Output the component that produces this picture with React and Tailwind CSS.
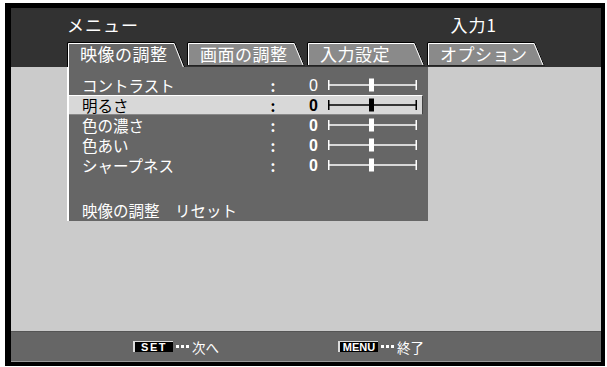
import React from "react";

const FONT = { fontFamily: '"Noto Sans CJK JP", "Noto Sans", sans-serif' };

function Tab({ label, active }) {
  return (
    <div className="relative w-[118px] h-[25px] flex items-start">
      <svg className="absolute inset-0" width="118" height="25" viewBox="0 0 118 25">
        {active ? (
          <>
            <polygon points="0,0 108,0 118,25 0,25" fill="#666666" />
            <polyline points="0.5,25 0.5,0.5 107.7,0.5 117.5,25" fill="none" stroke="#000" strokeWidth="1" />
            <polyline points="1.5,25 1.5,1.5 107,1.5 116.3,25" fill="none" stroke="#fff" strokeWidth="1" />
          </>
        ) : (
          <>
            <polygon points="0,0 108,0 117.5,23.5 0,23.5" fill="#8a8a8a" />
            <polyline points="0.5,24 0.5,0.5 107.7,0.5 117.3,24" fill="none" stroke="#000" strokeWidth="1" />
            <polyline points="1.5,23 1.5,1.5 107,1.5 116,23" fill="none" stroke="#fff" strokeWidth="1" />
            <line x1="0" y1="23.5" x2="118" y2="23.5" stroke="#222" strokeWidth="1" />
          </>
        )}
      </svg>
      <span className="relative pl-[13px] text-[17px] leading-[24px] text-white tracking-[0.5px]">{label}</span>
    </div>
  );
}

function Slider({ dark }) {
  const c = dark ? "#000" : "#fff";
  return (
    <svg width="89" height="14" viewBox="0 0 89 14">
      <line x1="0" y1="7" x2="89" y2="7" stroke={c} strokeWidth="1.5" />
      <line x1="0.75" y1="2" x2="0.75" y2="12" stroke={c} strokeWidth="1.5" />
      <line x1="88.25" y1="2" x2="88.25" y2="12" stroke={c} strokeWidth="1.5" />
      <rect x="41" y="0.5" width="5" height="13" fill={c} />
    </svg>
  );
}

function Row({ label, selected, boldValue = true }) {
  return (
    <div
      className={
        "flex items-center h-[20px] " +
        (selected
          ? "bg-[#d8d8d8] text-black border-t border-t-white border-r border-r-[#444] border-b border-b-[#888] mr-[5px]"
          : "text-white")
      }
    >
      <span className="w-[199px] pl-[13px] text-[15.5px] leading-[17px]">{label}</span>
      <span className="w-[10px] text-center text-[15px] font-bold leading-[17px]">:</span>
      <span
        className={
          "w-[40px] text-right text-[16px] leading-[17px] " + (boldValue ? "font-bold" : "font-normal")
        }
        style={{ fontFamily: '"Liberation Sans", Arial, sans-serif' }}
      >
        0
      </span>
      <span className="ml-[10px] flex items-center">
        <Slider dark={selected} />
      </span>
    </div>
  );
}

function Badge({ text, wide }) {
  return (
    <span
      className={
        "inline-flex items-center justify-center w-[40px] h-[11px] bg-black text-white text-[11px] font-black leading-none border-l-2 border-t border-l-[#ddd] border-t-[#ddd] " +
        (wide ? "tracking-[0px]" : "tracking-[1.5px]")
      }
      style={{ fontFamily: '"Liberation Sans", Arial, sans-serif' }}
    >
      {text}
    </span>
  );
}

function Dots() {
  return (
    <span className="flex items-center gap-[2px] mx-[3px]">
      <span className="w-[3px] h-[3px] bg-white" />
      <span className="w-[3px] h-[3px] bg-white" />
      <span className="w-[3px] h-[3px] bg-white" />
    </span>
  );
}

export default function App() {
  return (
    <div className="w-[607px] h-[367px] bg-white pl-[5px] pt-[3px]" style={FONT}>
      <div className="w-[600px] h-[363px] bg-black pl-[6px] pt-[5px]">
        <div className="w-[590px] h-[354px] flex flex-col">
          {/* header */}
          <div className="bg-[#323232] h-[59px] flex flex-col">
            <div className="h-[34px] flex items-center justify-between pl-[56px] pr-[104px] text-white text-[17px] tracking-[1px]">
              <span>メニュー</span>
              <span>入力1</span>
            </div>
            <div className="flex gap-[2px] pl-[56px] items-start">
              <Tab label="映像の調整" active />
              <Tab label="画面の調整" />
              <Tab label="入力設定" />
              <Tab label="オプション" />
            </div>
          </div>
          {/* body */}
          <div className="bg-[#cbcbcb] flex-1 pl-[56px]">
            <div className="w-[361px] h-[154px] bg-[#666666] border-l-2 border-l-white pt-[8px] flex flex-col">
              <Row label="コントラスト" boldValue={false} />
              <Row label="明るさ" selected />
              <Row label="色の濃さ" />
              <Row label="色あい" />
              <Row label="シャープネス" />
              <div className="h-[25px]" />
              <div className="h-[20px] pl-[13px] text-white text-[15.5px] leading-[20px]">
                映像の調整　リセット
              </div>
            </div>
          </div>
          {/* footer */}
          <div className="h-[31px] bg-[#666666] border-t border-t-[#555] border-b border-b-[#999] flex items-center text-white text-[13.5px] leading-[16px]">
            <div className="ml-[122px] w-[205px] flex items-center">
              <Badge text="SET" />
              <Dots />
              <span>次へ</span>
            </div>
            <div className="flex items-center">
              <Badge text="MENU" wide />
              <Dots />
              <span>終了</span>
            </div>
          </div>
        </div>
      </div>
    </div>
  );
}
